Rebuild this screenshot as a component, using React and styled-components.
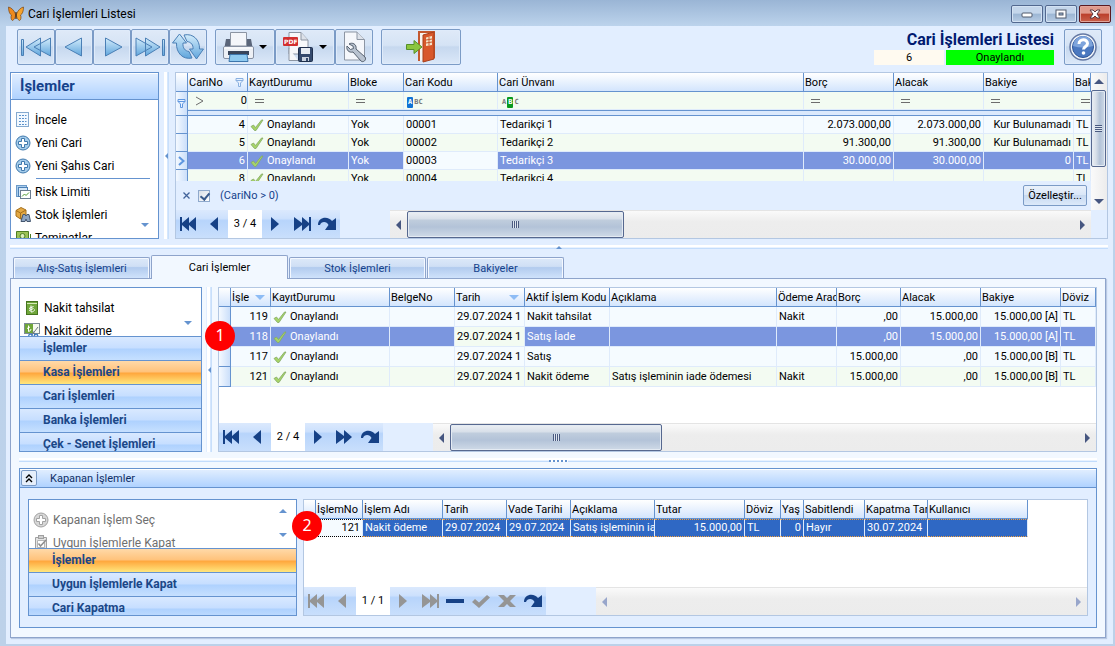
import React, { useState } from 'react'
import styled, { createGlobalStyle, css } from 'styled-components'

const GlobalStyle = createGlobalStyle`
* { box-sizing: border-box; }
body {
  margin: 0;
  font-family: Roboto, "Noto Sans", sans-serif;
  font-size: 11px;
  color: #000;
}
button, input { font: inherit; color: inherit; padding: 0; margin: 0; }
button { cursor: pointer; }
svg { display: block; flex: none; }
`

const line = '#6593cf'
const softLine = '#b3c7e2'

/* window frame */

const Window = styled.div`
display: flex;
flex-direction: column;
min-height: 100vh;
padding: 0 2px 2px 6px;
background: linear-gradient(#9ab5d5, #bcd3ec 26px, #bcd1e9);
`

const TitleBar = styled.header`
display: flex;
align-items: center;
height: 26px;
padding: 2px 2px 0;
gap: 4px;
font-size: 12px;
`

const Caption = styled.span`
flex: 1;
`

const WindowButtons = styled.div`
display: flex;
gap: 2px;
`

const WindowButton = styled.button`
display: grid;
place-items: center;
width: 32px;
height: 18px;
border: 1px solid ${p => p.$close ? '#5b1a20' : '#52688f'};
border-radius: 2px;
box-shadow: inset 0 0 0 1px ${p => p.$close ? '#e2a59b' : '#d3e2f3'};
background: ${p => p.$close
    ? 'linear-gradient(#e09a8c 45%, #bb3f2b 50%, #c9604b)'
    : 'linear-gradient(#c4d6eb 45%, #9cb6d4 50%, #b7cce4)'};
`

const Client = styled.main`
display: flex;
flex-direction: column;
flex: 1;
padding: 3px 5px 6px 4px;
background: #e2eeff;
`

/* toolbar */

const Toolbar = styled.div`
display: flex;
height: 36px;
margin: 0 6px 7px 7px;
`

const ToolGroup = styled.div`
display: flex;
margin-right: 8px;
`

const ToolButton = styled.button`
display: flex;
align-items: center;
justify-content: center;
width: ${p => p.$w || 38}px;
height: 36px;
border: 1px solid #7b9bc6;
border-radius: 2px;
box-shadow: inset 0 0 0 1px #dfebfa;
background: linear-gradient(#dfeaf8 0%, #d5e3f5 45%, #c6d8ef 50%, #dbe8f8 100%);
`

const Caret = styled.span`
margin-left: 5px;
border: 4px solid transparent;
border-top-color: #000;
border-bottom: 0;
`

const RecordInfo = styled.div`
display: flex;
flex-direction: column;
align-items: flex-end;
margin: 0 10px 0 auto;
`

const RecordTitle = styled.h1`
margin: 0;
height: 21px;
font-size: 16px;
line-height: 21px;
font-weight: bold;
color: #001a70;
`

const RecordFields = styled.div`
display: flex;
gap: 2px;
`

const RecordField = styled.output`
width: ${p => p.$w}px;
height: 15px;
line-height: 16px;
text-align: center;
background: ${p => p.$bg};
`

/* panes */

const Pane = styled.div`
display: flex;
position: relative;
`

const VSplitter = styled.div`
display: flex;
align-items: center;
justify-content: center;
width: 6px;
margin: 0 ${p => p.$right || 5}px 0 4px;
background: linear-gradient(90deg, #e2eeff 1px, #fff 1px, #fff 4px, #e2eeff 4px, #c8dffb 5px);
`

const HSplitter = styled.div`
display: flex;
justify-content: center;
align-items: center;
height: 5px;
margin: ${p => p.$margin};
background: linear-gradient(#fff 2px, #e8f2ff 2px, #e8f2ff 3px, #c2dcfc 3px, #c2dcfc 4px, transparent 4px);
`

const Dots = styled.span`
width: 19px;
height: 2px;
background: repeating-linear-gradient(90deg, ${line} 0 2px, #fff 2px 4px);
`

const Arrow = styled.i`
flex: none;
border: ${p => p.$s || 4}px solid transparent;
${p => p.$dir === 'left' && css`border-left: 0; border-right-color: ${p.$c || line};`}
${p => p.$dir === 'right' && css`border-right: 0; border-left-color: ${p.$c || line};`}
${p => p.$dir === 'up' && css`border-top: 0; border-bottom-color: ${p.$c || line};`}
${p => p.$dir === 'down' && css`border-bottom: 0; border-top-color: ${p.$c || line};`}
`

/* navigation panel */

const Nav = styled.nav`
flex: none;
position: relative;
width: ${p => p.$w}px;
height: ${p => p.$h}px;
overflow: hidden;
border: 1px solid ${line};
background: #fff;
font-size: 12px;
`

const NavTitle = styled.h2`
margin: 0;
height: 27px;
padding-left: 9px;
border-bottom: 1px solid ${line};
box-shadow: inset 1px 1px 0 #fff;
background: linear-gradient(#e3efff, #afd2ff);
font-size: 15px;
line-height: 26px;
color: #15428b;
`

const NavList = styled.div`
height: ${p => p.$h}px;
padding: 8px 0 0 4px;
overflow: hidden;
`

const NavItem = styled.button`
display: flex;
align-items: center;
gap: 4px;
width: 100%;
height: 23px;
border: 0;
background: none;
color: ${p => p.disabled ? '#6f6f6f' : '#000'};
white-space: nowrap;
`

const NavRule = styled.hr`
height: 1px;
margin: 1px 8px 1px 21px;
border: 0;
background: ${line};
`

const NavScroll = styled.div`
position: absolute;
right: 9px;
top: ${p => p.$top}px;
display: flex;
flex-direction: column;
gap: 20px;
`

const NavHeading = styled.button`
display: block;
width: 100%;
height: 24px;
padding-left: 23px;
border: 0;
border-top: 1px solid ${line};
text-align: left;
line-height: 23px;
font-weight: bold;
color: #1b4787;
background: ${p => p.$active
    ? 'linear-gradient(#ffd9a8 0%, #ffc27a 48%, #ffa63c 52%, #ffe67d 100%)'
    : 'linear-gradient(#d9e9ff 0%, #c6deff 48%, #aed1fe 52%, #c6e0ff 100%)'};
`

/* grid */

const GridBox = styled.section`
display: flex;
flex-direction: column;
flex: 1;
min-width: 0;
border: 1px solid ${softLine};
background: #fff;
`

const GridBody = styled.div`
display: flex;
`

const GridMain = styled.div`
flex: 1;
min-width: 0;
`

const TableArea = styled.div`
height: ${p => p.$h}px;
overflow: hidden;
`

const Table = styled.table`
width: ${p => p.$w || '100%'};
table-layout: fixed;
border-collapse: separate;
border-spacing: 0;
`

const Th = styled.th`
height: 19px;
padding: 0 0 0 1px;
border-right: 1px solid ${line};
border-bottom: 1px solid ${line};
background: linear-gradient(#fff, #d3e5fd);
font-weight: normal;
text-align: left;
white-space: nowrap;
overflow: hidden;
`

const ThInner = styled.span`
display: flex;
align-items: center;
justify-content: space-between;
padding-right: ${p => p.$end || 5}px;
`

const Indicator = styled.td`
height: ${p => p.$h}px;
padding: 0;
border-right: 1px solid ${line};
border-bottom: 1px solid ${line};
background: linear-gradient(90deg, #f4f9ff, #cbdffa);
& > svg { margin: auto; }
`

const Td = styled.td`
height: ${p => p.$h}px;
padding: 0 ${p => p.$right ? 2 : 0}px 0 ${p => p.$right ? 0 : 2}px;
border-right: 1px solid #dfebfb;
border-bottom: 1px solid #dfebfb;
line-height: 14px;
text-align: ${p => p.$right ? 'right' : 'left'};
white-space: nowrap;
overflow: hidden;
background: ${p => p.$alt ? '#f3fbf2' : '#f5fbff'};
${p => p.$selected && css`background: #7b96df; color: #fff;`}
${p => p.$strong && css`
  background: #2f68c4;
  color: #fff;
  border-top: 1px dotted #f0a040;
  border-bottom: 1px dotted #f0a040;
`}
${p => p.$edge && css`
  border-top: 1px dotted #000;
  border-bottom: 1px dotted #000;
`}
`

const Status = styled.span`
display: flex;
align-items: center;
gap: 3px;
`

const FilterTd = styled(Td)`
color: #6d6d6d;
background: #f3fbf2;
`

const FilterFlex = styled.span`
display: flex;
align-items: center;
justify-content: space-between;
padding-left: 5px;
`

const FilterInput = styled.input`
width: 30px;
height: 14px;
border: 0;
background: none;
color: #000;
text-align: right;
`

const Band = styled.td`
height: 6px;
padding: 0;
border-top: 1px solid ${line};
border-bottom: 1px solid ${line};
background: #dbe9fc;
`

const FilterPanel = styled.div`
display: flex;
align-items: center;
height: 29px;
padding: 0 4px 0 6px;
background: #e2eeff;
color: #15428b;
`

const PlainButton = styled.button`
display: grid;
place-items: center;
border: 0;
background: none;
`

const FilterLabel = styled.label`
display: flex;
align-items: center;
gap: 10px;
flex: 1;
margin-left: 7px;
`

const Check = styled.input`
appearance: none;
width: 12px;
height: 12px;
border: 1px solid #8fa9cc;
background: linear-gradient(135deg, #d8dfe8, #fff);
&:checked::after {
  content: "";
  display: block;
  width: 4px;
  height: 7px;
  margin: 0 3px;
  border: solid #3a5b8c;
  border-width: 0 2px 2px 0;
  transform: rotate(40deg);
}
`

const Customize = styled.button`
width: 64px;
height: 21px;
border: 1px solid #7b9bc6;
border-radius: 2px;
color: #000;
background: linear-gradient(#e9f1fb, #d9e6f7 50%, #c8daf1 50%, #dce9f9);
`

const GridFooter = styled.div`
display: flex;
height: 28px;
padding-right: ${p => p.$end || 0}px;
background: #e2eeff;
`

const Navigator = styled.div`
display: flex;
margin-right: 50px;
background: linear-gradient(#dbe9fd 0%, #cde1fd 30%, #b7d4fb 38%, #c9dffc 100%);
`

const NavButton = styled.button`
display: grid;
place-items: center;
width: 26px;
border: 0;
background: none;
color: ${p => p.disabled ? '#959595' : '#164186'};
`

const Position = styled.span`
width: 34px;
line-height: 28px;
text-align: center;
background: #fff;
`

const Track = styled.div`
display: flex;
flex: 1;
border-top: 1px solid #e4e4e4;
background: linear-gradient(#fafafa, #ededed 40%, #ececec);
`

const TrackEnd = styled(PlainButton)`
width: 17px;
&:last-child { margin-left: auto; }
`

const Thumb = styled.div`
display: grid;
place-items: center;
width: ${p => p.$size};
border: 1px solid #56688f;
border-radius: 2px;
box-shadow: inset 0 0 0 1px #e4ebf3;
background: linear-gradient(#eceff3 0%, #d7dfe9 28%, #c0cddd 32%, #b3c3d8 60%, #cfdae7 100%);
`

const Grip = styled.span`
width: 7px;
height: 7px;
background: repeating-linear-gradient(${p => p.$vertical ? '0deg' : '90deg'}, #4a5a80 0 1px, #dde5ef 1px 2px);
`

const VTrack = styled.div`
display: flex;
flex-direction: column;
width: 16px;
background: linear-gradient(90deg, #fafafa, #ececec);
`

const VEnd = styled(PlainButton)`
height: 17px;
&:last-child { margin-top: auto; }
`

const VThumb = styled(Thumb)`
width: 15px;
height: 77px;
background: linear-gradient(90deg, #eceff3 0%, #d7dfe9 30%, #b3c3d8 60%, #cfdae7 100%);
`

const Letters = styled.span`
display: inline-flex;
align-items: center;
margin-left: 1px;
font-family: "DejaVu Sans Mono", monospace;
font-size: 7px;
font-weight: bold;
line-height: 11px;
`

const Letter = styled.span`
padding: 0 1px;
border-radius: 1px;
background: ${p => p.$bg || 'none'};
color: ${p => p.$bg ? '#fff' : '#777'};
`

/* tabs and groups */

const TabList = styled.div`
display: flex;
align-items: flex-end;
height: 23px;
padding-left: 3px;
`

const Tab = styled.button`
width: 137px;
height: 21px;
margin-right: 1px;
border: 1px solid #8ea4cb;
border-bottom: 0;
border-radius: 2px 2px 0 0;
box-shadow: inset 1px 1px 0 #f4f8ff, inset -1px 0 0 #f4f8ff;
background: linear-gradient(#dde9f9 0%, #cfdff5 42%, #b2cbee 48%, #cfe2fb 100%);
color: #15428b;
${p => p.$active && css`
  position: relative;
  height: 24px;
  margin-bottom: -1px;
  background: #f2f8ff;
  color: #000;
  z-index: 1;
`}
`

const TabPage = styled.div`
flex: 1;
margin-right: 2px;
padding: 8px 8px 9px;
border: 1px solid #8ea4cb;
box-shadow: 1px 1px 1px #b9c9e3;
background: #f2f8ff;
`

const Group = styled.section`
border: 1px solid ${line};
background: #e2eeff;
`

const GroupHeader = styled.header`
display: flex;
align-items: center;
height: 19px;
gap: 13px;
padding-left: 1px;
border-bottom: 1px solid ${line};
box-shadow: inset 0 1px 0 #fff;
background: linear-gradient(#e3efff, #afd2ff);
color: #0f2f66;
`

const Toggle = styled.button`
display: grid;
place-items: center;
width: 16px;
height: 16px;
border: 1px solid #7b9bc6;
border-radius: 2px;
background: #e6effb;
`

const GroupBody = styled.div`
display: flex;
position: relative;
gap: 6px;
padding: 11px 8px;
`

const Badge = styled.span`
position: absolute;
left: ${p => p.$x}px;
top: ${p => p.$y}px;
z-index: 2;
width: 30px;
height: 30px;
border-radius: 50%;
background: #f00;
color: #fff;
font-family: "Noto Sans", sans-serif;
font-size: 16px;
line-height: 29px;
text-align: center;
`

/* icons */

const BlueFill = () => (
    <defs>
        <linearGradient id="blue" x1="0" y1="0" x2="0" y2="1">
            <stop offset="0" stopColor="#d3ecfb" />
            <stop offset="1" stopColor="#5fa5dc" />
        </linearGradient>
    </defs>
)

const Move = ({ d }) => (
    <svg width="36" height="34" viewBox="0 0 36 34">
        <BlueFill />
        <path d={d} fill="url(#blue)" stroke="#4a7fb5" strokeLinejoin="round" />
    </svg>
)

const Butterfly = () => (
    <svg width="16" height="16" viewBox="0 0 16 16">
        <path d="M7.500 8C6 4 3 1.500 .5 1C.5 5 1.500 8 3.500 9C2.500 11 3 14 4.500 14.500C6.500 13.500 7.300 11.500 7.500 10Z" fill="#ee8a1e" stroke="#7a4614" strokeWidth=".7" />
        <path d="M8.500 8C10 4 13 1.500 15.500 1C15.500 5 14.500 8 12.500 9C13.500 11 13 14 11.500 14.500C9.500 13.500 8.700 11.500 8.500 10Z" fill="#f6a32c" stroke="#7a4614" strokeWidth=".7" />
        <path d="M8 6V13" stroke="#4a2c10" strokeWidth="1.200" />
    </svg>
)

const Refresh = () => (
    <svg width="32" height="28" viewBox="0 0 32 28">
        <BlueFill />
        <path d="M7.500 1L14.500 10H11C10.500 15 13 18 17 18.500L20 25C11 27 4 20 4.500 10H.5Z" fill="url(#blue)" stroke="#4a7fb5" strokeLinejoin="round" />
        <path d="M24.500 26L17.500 16H21C21.500 12 19 9 15 8.500L12 2C21 0 28 7 27.500 16H31.500Z" fill="url(#blue)" stroke="#4a7fb5" strokeLinejoin="round" />
    </svg>
)

const Printer = () => (
    <svg width="31" height="31" viewBox="0 0 31 31">
        <path d="M3 7H7V16H24V7H28L30 18H1Z" fill="#5a6579" />
        <path d="M7.500 .5H23.500V14H7.500Z" fill="#f4f6fa" stroke="#8c95a3" />
        <rect x=".5" y="14.500" width="30" height="12" rx="1.500" fill="#edf0f5" stroke="#8690a2" />
        <path d="M1 16H30" stroke="#fff" />
        <rect x="5" y="19" width="21" height="4" fill="#39455a" />
        <path d="M7 22.500H24L25 29.500H6Z" fill="#8fcaf0" stroke="#3d76ac" />
    </svg>
)

const PdfSave = () => (
    <svg width="31" height="31" viewBox="0 0 31 31">
        <path d="M6 .5H18L25 8V22H6Z" fill="#f7f8fa" stroke="#8c95a3" />
        <path d="M18 .5V8H25" fill="#dde2ea" stroke="#8c95a3" />
        <path d="M6 16V28.500H15" fill="#f7f8fa" stroke="#8c95a3" />
        <rect x="0" y="5" width="15" height="9" rx="1" fill="#d22f2f" />
        <text x="1" y="12" fill="#fff" fontSize="6" fontWeight="bold" fontFamily="DejaVu Sans">PDF</text>
        <rect x="15.500" y="15.500" width="14" height="14" rx="1" fill="#34496c" stroke="#1f2f4c" />
        <rect x="18" y="16" width="9" height="6" fill="#e7ecf3" />
        <rect x="19" y="25" width="7" height="4" fill="#c9d2df" />
        <rect x="23" y="26" width="2" height="3" fill="#34496c" />
    </svg>
)

const Wrench = () => (
    <svg width="26" height="32" viewBox="0 0 26 32">
        <path d="M3.500 1H16L23.500 8.500V29H3.500Z" fill="#f5f7fb" stroke="#8c95a3" />
        <path d="M16 1V8.500H23.500" fill="#dde2ea" stroke="#8c95a3" />
        <path d="M8 13C11 11 16 13 15 18L24 26C26 29 22 32 20 30L12 21C8 22 5 19 6 15L9.500 18.500L12.500 17.500L12 15Z" fill="#b9c3d0" stroke="#56616f" />
    </svg>
)

const Door = () => (
    <svg width="30" height="32" viewBox="0 0 30 32">
        <path d="M13 30V1H28V27" fill="#f8f3ee" stroke="#c4582f" strokeWidth="2" />
        <path d="M17 4L28 1V28L17 31Z" fill="#d8582b" stroke="#a8401d" />
        <path d="M20 6.500L26 5V14L20 15Z" fill="#f6e3c8" />
        <path d="M23 6V14.500M20 9L26 8M20 12L26 11" stroke="#c4582f" />
        <path d="M.5 13.500H8V9.500L16 16L8 22.500V18.500H.5Z" fill="#8cc63e" stroke="#55902a" />
    </svg>
)

const Help = () => (
    <svg width="30" height="30" viewBox="0 0 30 30">
        <circle cx="15" cy="15" r="13" fill="#f4f7fb" stroke="#6478a4" strokeWidth="1.500" />
        <circle cx="15" cy="15" r="10.500" fill="#4b78c0" stroke="#2f5598" />
        <path d="M5 14a10 10 0 0 1 20 0q-10 3-20 0" fill="#7ea4dc" />
        <path d="M11 12c0-5.500 8.500-5.500 8.500-.5c0 3-4 3-4 6" stroke="#fff" strokeWidth="3" fill="none" />
        <circle cx="15.500" cy="21" r="1.800" fill="#fff" />
    </svg>
)

const Tick = () => (
    <svg width="14" height="14" viewBox="0 0 14 14">
        <path d="M1 8.500L3.500 7L5.500 9.500L11.500 2H13L6 12.500H4.500Z" fill="#a6d468" stroke="#84a866" strokeWidth=".8" />
    </svg>
)

const Funnel = ({ c = '#8ab0e0' }) => (
    <svg width="9" height="11" viewBox="0 0 9 11">
        <path d="M1 1.500H8V3.500L5.500 6V9.500H3.500V6L1 3.500Z" fill="#e8f2ff" stroke={c} />
        <path d="M1 3.500H8" stroke={c} />
    </svg>
)

const Chevron = () => (
    <svg width="7" height="10" viewBox="0 0 7 10">
        <path d="M1 1L5.500 5L1 9" fill="none" stroke="#5f97e0" strokeWidth="2" />
    </svg>
)

const Compare = () => (
    <svg width="9" height="10" viewBox="0 0 9 10">
        <path d="M1 1L8 5L1 9" fill="none" stroke="#6d6d6d" />
    </svg>
)

const Equals = () => (
    <svg width="9" height="10" viewBox="0 0 9 10">
        <path d="M0 3.500H9M0 6.500H9" stroke="#6d6d6d" />
    </svg>
)

const ListIcon = () => (
    <svg width="16" height="16" viewBox="0 0 16 16">
        <rect x="1.500" y=".5" width="12" height="14" fill="#f3f9ff" stroke="#86aacf" />
        <path d="M4 3.500H11.500M4 6.500H11.500M4 9.500H11.500M4 12.500H11.500" stroke="#5c92cc" strokeDasharray="2 1" />
    </svg>
)

const PlusIcon = ({ off }) => (
    <svg width="16" height="16" viewBox="0 0 16 16">
        <circle cx="8" cy="8" r="7" fill={off ? '#d6d6d6' : '#a3cbea'} stroke={off ? '#a2a2a2' : '#4079ad'} />
        <path d="M6.500 3.500H9.500V6.500H12.500V9.500H9.500V12.500H6.500V9.500H3.500V6.500H6.500Z" fill="#fff" stroke={off ? '#a2a2a2' : '#4079ad'} />
    </svg>
)

const RiskIcon = () => (
    <svg width="16" height="16" viewBox="0 0 16 16">
        <rect x="1.500" y="1.500" width="10" height="11" fill="#a9cdee" stroke="#6c9ac8" />
        <rect x="3.500" y="3.500" width="9" height="9" fill="#d6e8f8" stroke="#4d80b5" />
        <rect x="5.500" y="6.500" width="10" height="8" fill="#fff" stroke="#6b7c90" />
        <path d="M7 12.500L9.500 10L11 11.500L14 8.500" fill="none" stroke="#4f9a32" />
    </svg>
)

const StockIcon = () => (
    <svg width="16" height="16" viewBox="0 0 16 16">
        <path d="M1 3.500L6 .5L11 3V9L5.500 12L1 9Z" fill="#e4a944" stroke="#a5701c" />
        <path d="M1 3.500L5.500 6L11 3M5.500 6V12" fill="none" stroke="#a5701c" />
        <path d="M6 14.500L8 7.500H10L11 9L12 7.500H14L15.500 14.500H12L11 12L10 14.500Z" fill="#8ea5c2" stroke="#44566f" />
    </svg>
)

const MoneyIcon = () => (
    <svg width="16" height="16" viewBox="0 0 16 16">
        <path d="M1.500 1.500H13.500V10.500H1.500Z" fill="#9cc257" stroke="#4d7d23" />
        <circle cx="7.500" cy="6" r="2.500" fill="#dceebb" stroke="#4d7d23" />
        <path d="M2 12.500H15.500V4" fill="none" stroke="#4d7d23" />
    </svg>
)

const CashIcon = () => (
    <svg width="16" height="16" viewBox="0 0 16 16">
        <rect x="2.500" y="1.500" width="11" height="13" fill="#6fa63a" stroke="#46741f" />
        <path d="M3 3.500H13" stroke="#d7ebb9" />
        <path d="M7 5.500V12C9 12 10.500 11 10.500 9.500M5 8.500L9.500 6.500M5 10.500L9.500 8.500" fill="none" stroke="#fff" />
    </svg>
)

const CutIcon = () => (
    <svg width="16" height="16" viewBox="0 0 16 16">
        <rect x=".5" y=".5" width="15" height="10" fill="#f6f9f0" stroke="#7c8b95" />
        <rect x="1" y="1" width="8" height="9" fill="#6fa63a" />
        <path d="M4.500 2.500V8.500Q7 8 7 6M3 5.500L6 4" fill="none" stroke="#fff" />
        <path d="M14 4L7.500 12.500M8.500 8L12 12.500" stroke="#6b7785" />
        <circle cx="6.500" cy="13" r="1.800" fill="none" stroke="#3b7cc0" strokeWidth="1.300" />
        <circle cx="12" cy="13" r="1.800" fill="none" stroke="#3b7cc0" strokeWidth="1.300" />
    </svg>
)

const ClipIcon = () => (
    <svg width="16" height="16" viewBox="0 0 16 16">
        <path d="M2.500 2.500H13.500V14.500H2.500Z" fill="#e4e4e4" stroke="#a0a0a0" />
        <rect x="5.500" y=".5" width="5" height="3" fill="#cfcfcf" stroke="#a0a0a0" />
        <path d="M4.500 5.500H11.500V12.500H4.500Z" fill="#fff" stroke="#b5b5b5" />
        <path d="M5.500 8.500L7.500 11L13 5" fill="none" stroke="#8e8e8e" strokeWidth="1.500" />
    </svg>
)

const glyphs = {
    first: 'M1 1H3V7L10 1V7L17 1V15L10 9V15L3 9V15H1Z',
    prev: 'M13 1V15L5 8Z',
    next: 'M6 1V15L14 8Z',
    last: 'M18 1H20V15H18V9L11 15V9L3 15V1L11 7V1L18 7Z',
    forward: 'M2 1L10 7V1L18 8L10 15V9L2 15Z',
    minus: 'M1 6H19V10H1Z',
    check: 'M1 9L4 6L8 9.500L16 2L19 4.500L8 15Z',
    cross: 'M1 2H7L10 5L13 2H19L13 8L19 14H13L10 11L7 14H1L7 8Z',
    redo: 'M1 9C1 0 12 0 15 5L19 2V14H8L11.500 9C10 5 4 5 3 9Z'
}

const labels = {
    first: 'İlk kayıt', prev: 'Önceki kayıt', next: 'Sonraki kayıt', last: 'Son kayıt', forward: 'İleri',
    minus: 'Sil', check: 'Onayla', cross: 'Vazgeç', redo: 'Yenile'
}

const RecordNavigator = ({ position, after, disabled = [] }) => {
    const button = (name) => (
        <NavButton key={name} aria-label={labels[name]} disabled={disabled.includes(name)}>
            <svg width="20" height="16" viewBox="0 0 20 16"><path d={glyphs[name]} fill="currentColor" /></svg>
        </NavButton>
    )
    return (
        <Navigator>
            {['first', 'prev'].map(button)}
            <Position>{position}</Position>
            {after.map(button)}
        </Navigator>
    )
}

const ScrollBar = ({ size, off }) => (
    <Track>
        <TrackEnd aria-label="Sola kaydır"><Arrow $dir="left" $s={5} $c={off ? '#98a6cb' : '#465680'} /></TrackEnd>
        {size && <Thumb $size={size}><Grip /></Thumb>}
        <TrackEnd aria-label="Sağa kaydır"><Arrow $dir="right" $s={5} $c={off ? '#98a6cb' : '#465680'} /></TrackEnd>
    </Track>
)

const Head = ({ columns }) => (
    <>
        <colgroup>
            <col style={{ width: 12 }} />
            {columns.map((c) => <col key={c.name} style={{ width: c.w }} />)}
        </colgroup>
        <thead>
            <tr>
                <Th />
                {columns.map((c) => (
                    <Th key={c.name} scope="col">{c.mark ? <ThInner $end={c.end}>{c.name}{c.mark}</ThInner> : c.name}</Th>
                ))}
            </tr>
        </thead>
    </>
)

const Row = ({ row, columns, h, alt, selected, strong, focus, mark }) => (
    <tr>
        <Indicator $h={h}>{mark}</Indicator>
        {columns.map((c, i) => (
            <Td
                key={c.name}
                $h={h}
                $right={c.right}
                $alt={alt}
                $selected={selected && i !== focus}
                $strong={strong && i !== focus}
                $edge={strong && i === focus}
            >
                {c.status ? <Status><Tick />{row[i]}</Status> : row[i]}
            </Td>
        ))}
    </tr>
)

const accountColumns = [
    { name: 'CariNo', w: 60, right: true, mark: <Funnel />, end: 3 },
    { name: 'KayıtDurumu', w: 101, status: true },
    { name: 'Bloke', w: 55 },
    { name: 'Cari Kodu', w: 94 },
    { name: 'Cari Ünvanı' },
    { name: 'Borç', w: 90, right: true },
    { name: 'Alacak', w: 90, right: true },
    { name: 'Bakiye', w: 90, right: true },
    { name: 'Bak', w: 17 }
]

const accounts = [
    ['4', 'Onaylandı', 'Yok', '00001', 'Tedarikçi 1', '2.073.000,00', '2.073.000,00', 'Kur Bulunamadı', 'TL'],
    ['5', 'Onaylandı', 'Yok', '00002', 'Tedarikçi 2', '91.300,00', '91.300,00', 'Kur Bulunamadı', 'TL'],
    ['6', 'Onaylandı', 'Yok', '00003', 'Tedarikçi 3', '30.000,00', '30.000,00', '0', 'TL'],
    ['8', 'Onaylandı', 'Yok', '00004', 'Tedarikçi 4', '', '', '', 'TL']
]

const movementColumns = [
    { name: 'İşle', w: 40, right: true, mark: <Arrow $dir="down" $s={5} $c="#8dbcf5" /> },
    { name: 'KayıtDurumu', w: 119, status: true },
    { name: 'BelgeNo', w: 65 },
    { name: 'Tarih', w: 70, mark: <Arrow $dir="down" $s={5} $c="#8dbcf5" /> },
    { name: 'Aktif İşlem Kodu', w: 85 },
    { name: 'Açıklama' },
    { name: 'Ödeme Aracı', w: 60 },
    { name: 'Borç', w: 64, right: true },
    { name: 'Alacak', w: 80, right: true },
    { name: 'Bakiye', w: 80, right: true },
    { name: 'Döviz', w: 35 }
]

const movements = [
    ['119', 'Onaylandı', '', '29.07.2024 1', 'Nakit tahsilat', '', 'Nakit', ',00', '15.000,00', '15.000,00 [A]', 'TL'],
    ['118', 'Onaylandı', '', '29.07.2024 1', 'Satış İade', '', '', ',00', '15.000,00', '15.000,00 [A]', 'TL'],
    ['117', 'Onaylandı', '', '29.07.2024 1', 'Satış', '', '', '15.000,00', ',00', '15.000,00 [B]', 'TL'],
    ['121', 'Onaylandı', '', '29.07.2024 1', 'Nakit ödeme', 'Satış işleminin iade ödemesi', 'Nakit', '15.000,00', ',00', '15.000,00 [B]', 'TL']
]

const closedColumns = [
    { name: 'İşlemNo', w: 47, right: true },
    { name: 'İşlem Adı', w: 80 },
    { name: 'Tarih', w: 64 },
    { name: 'Vade Tarihi', w: 64 },
    { name: 'Açıklama', w: 84 },
    { name: 'Tutar', w: 90, right: true },
    { name: 'Döviz', w: 36 },
    { name: 'Yaş', w: 23, right: true },
    { name: 'Sabitlendi', w: 61 },
    { name: 'Kapatma Tarihi', w: 63 },
    { name: 'Kullanıcı', w: 100 }
]

const closed = ['121', 'Nakit ödeme', '29.07.2024', '29.07.2024', 'Satış işleminin iade ödemesi', '15.000,00', 'TL', '0', 'Hayır', '30.07.2024', '']

const tabs = ['Alış-Satış İşlemleri', 'Cari İşlemler', 'Stok İşlemleri', 'Bakiyeler']

const AccountGrid = () => {
    const [filtered, setFiltered] = useState(true)
    return (
        <GridBox>
            <GridBody>
                <GridMain>
                    <TableArea $h={108}>
                        <Table>
                            <Head columns={accountColumns} />
                            <tbody>
                                <tr>
                                    <Indicator $h={24} rowSpan={2}><Funnel c="#5f97e0" /></Indicator>
                                    <FilterTd $h={18}>
                                        <FilterFlex><Compare /><FilterInput aria-label="CariNo filtresi" defaultValue="0" /></FilterFlex>
                                    </FilterTd>
                                    <FilterTd $h={18}><FilterFlex><Equals /></FilterFlex></FilterTd>
                                    <FilterTd $h={18}><FilterFlex><Equals /></FilterFlex></FilterTd>
                                    <FilterTd $h={18}><Letters><Letter $bg="#1173d4">A</Letter><Letter>BC</Letter></Letters></FilterTd>
                                    <FilterTd $h={18}><Letters><Letter>A</Letter><Letter $bg="#0a9a1e">B</Letter><Letter>C</Letter></Letters></FilterTd>
                                    {[0, 1, 2, 3].map((i) => (
                                        <FilterTd key={i} $h={18}><FilterFlex><Equals /></FilterFlex></FilterTd>
                                    ))}
                                </tr>
                                <tr><Band colSpan={9} /></tr>
                                {accounts.map((row, i) => (
                                    <Row
                                        key={row[0]}
                                        row={row}
                                        columns={accountColumns}
                                        h={18}
                                        alt={i % 2 === 1}
                                        selected={i === 2}
                                        focus={3}
                                        mark={i === 2 && <Chevron />}
                                    />
                                ))}
                            </tbody>
                        </Table>
                    </TableArea>
                    <FilterPanel>
                        <PlainButton aria-label="Filtreyi kaldır">
                            <svg width="9" height="9" viewBox="0 0 9 9"><path d="M1.500 1.500L7.500 7.500M7.500 1.500L1.500 7.500" stroke="#42639a" strokeWidth="1.300" /></svg>
                        </PlainButton>
                        <FilterLabel>
                            <Check type="checkbox" checked={filtered} onChange={() => setFiltered(!filtered)} />
                            (CariNo &gt; 0)
                        </FilterLabel>
                        <Customize>Özelleştir...</Customize>
                    </FilterPanel>
                </GridMain>
                <VTrack>
                    <VEnd aria-label="Yukarı kaydır"><Arrow $dir="up" $s={5} $c="#465680" /></VEnd>
                    <VThumb><Grip $vertical /></VThumb>
                    <VEnd aria-label="Aşağı kaydır"><Arrow $dir="down" $s={5} $c="#465680" /></VEnd>
                </VTrack>
            </GridBody>
            <GridFooter $end={16}>
                <RecordNavigator position="3 / 4" after={['next', 'last', 'redo']} />
                <ScrollBar size="31%" />
            </GridFooter>
        </GridBox>
    )
}

const App = () => {
    const [tab, setTab] = useState(1)

    return (
        <Window>
            <GlobalStyle />
            <TitleBar>
                <Butterfly />
                <Caption>Cari İşlemleri Listesi</Caption>
                <WindowButtons>
                    <WindowButton aria-label="Küçült">
                        <svg width="12" height="10" viewBox="0 0 12 10"><rect x="1" y="4" width="10" height="4" rx="1" fill="#fff" stroke="#505a6c" /></svg>
                    </WindowButton>
                    <WindowButton aria-label="Büyüt">
                        <svg width="12" height="10" viewBox="0 0 12 10"><rect x="1" y="1" width="10" height="8" fill="#fff" stroke="#505a6c" /><rect x="4" y="4" width="4" height="2" fill="#9cb6d4" stroke="#505a6c" /></svg>
                    </WindowButton>
                    <WindowButton $close aria-label="Kapat">
                        <svg width="12" height="10" viewBox="0 0 12 10"><path d="M1 1H4L6 3L8 1H11L8 5L11 9H8L6 7L4 9H1L4 5Z" fill="#fff" stroke="#5a3a42" /></svg>
                    </WindowButton>
                </WindowButtons>
            </TitleBar>
            <Client>
                <Toolbar>
                    <ToolGroup>
                        <ToolButton aria-label="İlk"><Move d="M3.500 9.500H5.500V25.500H3.500ZM22.500 8L8 17L22.500 26ZM32.500 8L16 17L32.500 26Z" /></ToolButton>
                        <ToolButton aria-label="Önceki"><Move d="M25.500 8L9 17L25.500 26Z" /></ToolButton>
                        <ToolButton aria-label="Sonraki"><Move d="M11.500 8L28 17L11.500 26Z" /></ToolButton>
                        <ToolButton aria-label="Son"><Move d="M30.500 9.500H32.500V25.500H30.500ZM13.500 8L28 17L13.500 26ZM4 8L20 17L4 26Z" /></ToolButton>
                        <ToolButton aria-label="Yenile"><Refresh /></ToolButton>
                    </ToolGroup>
                    <ToolGroup>
                        <ToolButton $w={60} aria-label="Yazdır"><Printer /><Caret /></ToolButton>
                        <ToolButton $w={60} aria-label="PDF kaydet"><PdfSave /><Caret /></ToolButton>
                        <ToolButton aria-label="Ayarlar"><Wrench /></ToolButton>
                    </ToolGroup>
                    <ToolButton $w={80} aria-label="Çıkış"><Door /></ToolButton>
                    <RecordInfo>
                        <RecordTitle>Cari İşlemleri Listesi</RecordTitle>
                        <RecordFields>
                            <RecordField $w={70} $bg="#fffaf0">6</RecordField>
                            <RecordField $w={108} $bg="#0f0">Onaylandı</RecordField>
                        </RecordFields>
                    </RecordInfo>
                    <ToolButton aria-label="Yardım"><Help /></ToolButton>
                </Toolbar>

                <Pane>
                    <Nav $w={149} $h={167}>
                        <NavTitle>İşlemler</NavTitle>
                        <NavList $h={138}>
                            <NavItem><ListIcon />İncele</NavItem>
                            <NavItem><PlusIcon />Yeni Cari</NavItem>
                            <NavItem><PlusIcon />Yeni Şahıs Cari</NavItem>
                            <NavRule />
                            <NavItem><RiskIcon />Risk Limiti</NavItem>
                            <NavItem><StockIcon />Stok İşlemleri</NavItem>
                            <NavItem><MoneyIcon />Teminatlar</NavItem>
                        </NavList>
                        <NavScroll $top={150}><Arrow $dir="down" /></NavScroll>
                    </Nav>
                    <VSplitter $right={6}><Arrow $dir="left" $s={3} /></VSplitter>
                    <AccountGrid />
                </Pane>

                <HSplitter $margin="6px 0 5px"><Arrow $dir="up" $s={3} /></HSplitter>

                <TabList role="tablist">
                    {tabs.map((name, i) => (
                        <Tab key={name} role="tab" aria-selected={tab === i} $active={tab === i} onClick={() => setTab(i)}>{name}</Tab>
                    ))}
                </TabList>
                <TabPage role="tabpanel">
                    <Pane>
                        <Nav $w={183} $h={165}>
                            <NavList $h={48}>
                                <NavItem><CashIcon />Nakit tahsilat</NavItem>
                                <NavItem><CutIcon />Nakit ödeme</NavItem>
                            </NavList>
                            <NavScroll $top={33}><Arrow $dir="down" /></NavScroll>
                            <NavHeading>İşlemler</NavHeading>
                            <NavHeading $active>Kasa İşlemleri</NavHeading>
                            <NavHeading>Cari İşlemleri</NavHeading>
                            <NavHeading>Banka İşlemleri</NavHeading>
                            <NavHeading>Çek - Senet İşlemleri</NavHeading>
                        </Nav>
                        <VSplitter $right={6}><Arrow $dir="left" $s={3} /></VSplitter>
                        <Badge $x={186} $y={34}>1</Badge>
                        <GridBox>
                            <TableArea $h={135}>
                                <Table>
                                    <Head columns={movementColumns} />
                                    <tbody>
                                        {movements.map((row, i) => (
                                            <Row
                                                key={row[0]}
                                                row={row}
                                                columns={movementColumns}
                                                h={20}
                                                alt={i % 2 === 1}
                                                selected={i === 1}
                                                focus={3}
                                            />
                                        ))}
                                    </tbody>
                                </Table>
                            </TableArea>
                            <GridFooter>
                                <RecordNavigator position="2 / 4" after={['next', 'forward', 'redo']} />
                                <ScrollBar size="32%" />
                            </GridFooter>
                        </GridBox>
                    </Pane>

                    <HSplitter $margin="6px 0 5px"><Dots /></HSplitter>

                    <Group>
                        <GroupHeader>
                            <Toggle aria-label="Daralt">
                                <svg width="8" height="9" viewBox="0 0 8 9"><path d="M1 4L4 1L7 4M1 8L4 5L7 8" fill="none" stroke="#000" strokeWidth="1.400" /></svg>
                            </Toggle>
                            Kapanan İşlemler
                        </GroupHeader>
                        <GroupBody>
                            <Nav $w={269} $h={117}>
                                <NavList $h={48}>
                                    <NavItem disabled><PlusIcon off />Kapanan İşlem Seç</NavItem>
                                    <NavItem disabled><ClipIcon />Uygun İşlemlerle Kapat</NavItem>
                                </NavList>
                                <NavScroll $top={9}><Arrow $dir="up" /><Arrow $dir="down" /></NavScroll>
                                <NavHeading $active>İşlemler</NavHeading>
                                <NavHeading>Uygun İşlemlerle Kapat</NavHeading>
                                <NavHeading>Cari Kapatma</NavHeading>
                            </Nav>
                            <Badge $x={272} $y={23}>2</Badge>
                            <GridBox>
                                <TableArea $h={87}>
                                    <Table $w="724px">
                                        <Head columns={closedColumns} />
                                        <tbody>
                                            <Row row={closed} columns={closedColumns} h={18} strong focus={0} />
                                        </tbody>
                                    </Table>
                                </TableArea>
                                <GridFooter>
                                    <RecordNavigator
                                        position="1 / 1"
                                        after={['next', 'last', 'minus', 'check', 'cross', 'redo']}
                                        disabled={['first', 'prev', 'next', 'last', 'check', 'cross']}
                                    />
                                    <ScrollBar off />
                                </GridFooter>
                            </GridBox>
                        </GroupBody>
                    </Group>
                </TabPage>
            </Client>
        </Window>
    )
}

export default App
